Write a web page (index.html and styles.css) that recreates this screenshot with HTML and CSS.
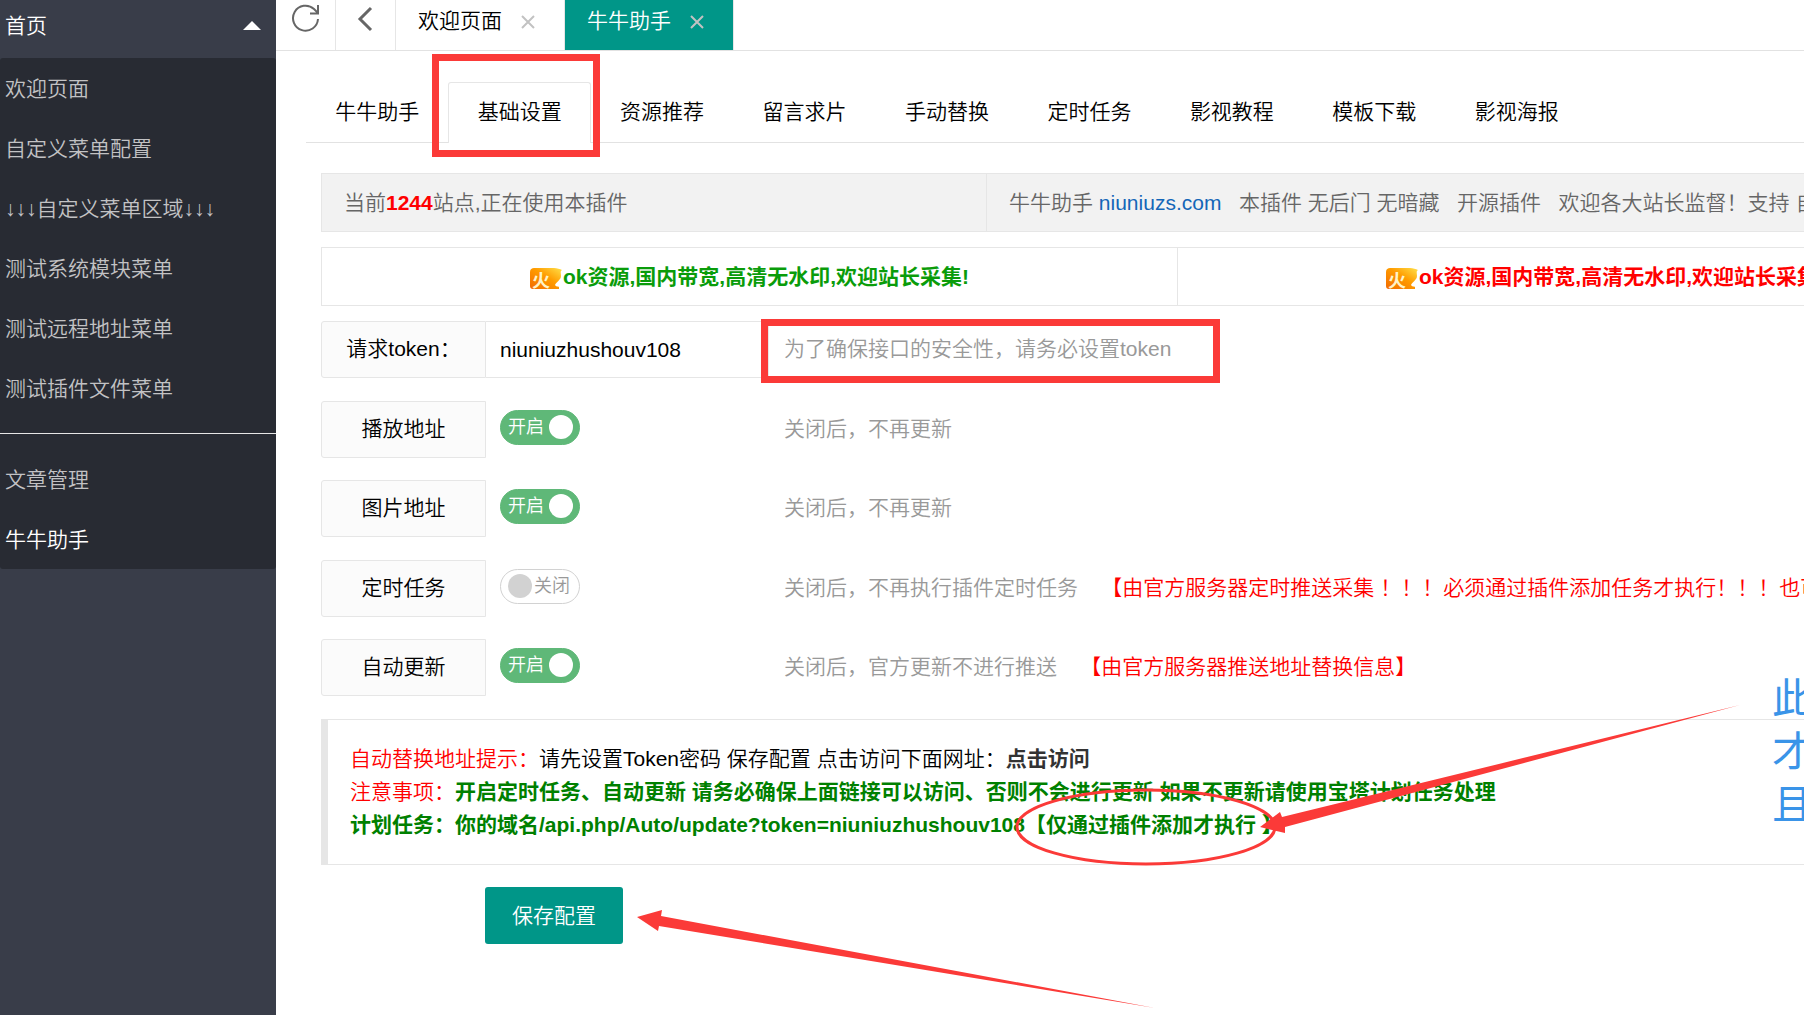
FILE: index.html
```html
<!DOCTYPE html>
<html lang="zh-CN">
<head>
<meta charset="utf-8">
<title>牛牛助手</title>
<link rel="stylesheet" href="styles.css">
</head>
<body>
<svg class="defs" width="0" height="0" aria-hidden="true">
  <defs>
    <linearGradient id="flame" x1="0" y1="1" x2="1" y2="0">
      <stop offset="0" stop-color="#f26a00"/>
      <stop offset=".55" stop-color="#ff9c00"/>
      <stop offset="1" stop-color="#ffe14a"/>
    </linearGradient>
    <symbol id="hot" viewBox="0 0 32 22">
      <path d="M4 0H24C27 0 30 1 32 2C30 3 31 5 31 8C31 12 26 14 25 17C26 19 28 18 29 19V21H3C1 21 0 20 0 18V4C0 1 2 0 4 0Z" fill="url(#flame)"/>
    </symbol>
  </defs>
</svg>
<div class="app">
  <aside class="side">
    <button class="side-head" type="button">首页
      <svg width="18" height="9" viewBox="0 0 18 9"><path d="M9 0L18 9H0Z" fill="#fff"/></svg>
    </button>
    <nav class="side-nav">
      <a href="#">欢迎页面</a>
      <a href="#">自定义菜单配置</a>
      <a href="#">↓↓↓自定义菜单区域↓↓↓</a>
      <a href="#">测试系统模块菜单</a>
      <a href="#">测试远程地址菜单</a>
      <a href="#">测试插件文件菜单</a>
      <hr>
      <a href="#">文章管理</a>
      <a href="#" class="current">牛牛助手</a>
    </nav>
  </aside>
  <main class="main">
    <div class="topbar">
      <button type="button" class="tool" aria-label="刷新">
        <svg width="30" height="30" viewBox="0 0 30 30" fill="none" stroke="#666" stroke-width="2"><path d="M27 16A12.500 12.500 0 1 1 23 6L27 10M27 2V10.500H19"/></svg>
      </button>
      <button type="button" class="tool" aria-label="后退">
        <svg width="30" height="30" viewBox="0 0 30 30" fill="none" stroke="#666" stroke-width="3"><path d="M20 5L9 16L20 27"/></svg>
      </button>
      <div class="page-tab"><a href="#">欢迎页面</a>
        <button type="button" aria-label="关闭"><svg width="14" height="14" viewBox="0 0 14 14" stroke="#c2c2c2" stroke-width="2"><path d="M1 1L13 13M13 1L1 13"/></svg></button>
      </div>
      <div class="page-tab active"><a href="#">牛牛助手</a>
        <button type="button" aria-label="关闭"><svg width="14" height="14" viewBox="0 0 14 14" stroke="#c2c2c2" stroke-width="2"><path d="M1 1L13 13M13 1L1 13"/></svg></button>
      </div>
    </div>
    <div class="content">
      <nav class="tabs">
        <div class="tab-list">
          <a href="#">牛牛助手</a>
          <a href="#" class="on">基础设置</a>
          <a href="#">资源推荐</a>
          <a href="#">留言求片</a>
          <a href="#">手动替换</a>
          <a href="#">定时任务</a>
          <a href="#">影视教程</a>
          <a href="#">模板下载</a>
          <a href="#">影视海报</a>
        </div>
      </nav>
      <div class="panel">
        <table class="info">
          <tr>
            <td class="count">当前<b>1244</b>站点,正在使用本插件</td>
            <td>牛牛助手 <a href="#">niuniuzs.com</a> &nbsp; 本插件 无后门 无暗藏 &nbsp; 开源插件 &nbsp; 欢迎各大站长监督！支持 自</td>
          </tr>
        </table>
        <table class="ads">
          <tr>
            <td><a href="#" class="green"><span class="hot"><svg width="32" height="22"><use href="#hot"/></svg><i>火</i></span>ok资源,国内带宽,高清无水印,欢迎站长采集!</a></td>
            <td><a href="#" class="red"><span class="hot"><svg width="32" height="22"><use href="#hot"/></svg><i>火</i></span>ok资源,国内带宽,高清无水印,欢迎站长采集!</a></td>
          </tr>
        </table>
        <form>
          <div class="rows">
            <div class="row">
              <label for="token">请求token：</label>
              <input class="text" id="token" type="text" value="niuniuzhushouv108">
              <p>为了确保接口的安全性，请务必设置token</p>
            </div>
            <div class="row">
              <label for="play">播放地址</label>
              <div class="field"><span class="switch"><input id="play" type="checkbox" checked><em>开启</em></span></div>
              <p>关闭后，不再更新</p>
            </div>
            <div class="row">
              <label for="pic">图片地址</label>
              <div class="field"><span class="switch"><input id="pic" type="checkbox" checked><em>开启</em></span></div>
              <p>关闭后，不再更新</p>
            </div>
            <div class="row">
              <label for="cron">定时任务</label>
              <div class="field"><span class="switch"><input id="cron" type="checkbox"><em>关闭</em></span></div>
              <p>关闭后，不再执行插件定时任务 &nbsp; &nbsp;<span class="warn">【由官方服务器定时推送采集 ！！！必须通过插件添加任务才执行！！！也可</span></p>
            </div>
            <div class="row">
              <label for="auto">自动更新</label>
              <div class="field"><span class="switch"><input id="auto" type="checkbox" checked><em>开启</em></span></div>
              <p>关闭后，官方更新不进行推送 &nbsp; &nbsp;<span class="warn">【由官方服务器推送地址替换信息】</span></p>
            </div>
          </div>
          <blockquote>
            <span class="warn">自动替换地址提示：</span>请先设置Token密码 保存配置 点击访问下面网址：<a href="#">点击访问</a><br>
            <span class="warn">注意事项：</span><b>开启定时任务、自动更新 请务必确保上面链接可以访问、否则不会进行更新 如果不更新请使用宝塔计划任务处理</b><br>
            <b>计划任务：你的域名/api.php/Auto/update?token=niuniuzhushouv108【仅通过插件添加才执行 】</b>
          </blockquote>
          <button class="save" type="submit">保存配置</button>
        </form>
      </div>
    </div>
  </main>
</div>
<div class="mark mark-tab"></div>
<div class="mark mark-token"></div>
<svg class="arrows" width="1804" height="1015" viewBox="0 0 1804 1015" fill="#fb3a38" aria-hidden="true">
  <ellipse cx="1146" cy="827" rx="129" ry="37" fill="none" stroke="#fb3a38" stroke-width="3"/>
  <path d="M1260 827L1280 812L1282 817L1740 705L1285 827L1285 833Z"/>
  <path d="M637 917L662 910L661 916L1155 1008L659 926L658 931Z"/>
</svg>
<div class="note">此<br>才<br>且</div>
</body>
</html>
```
FILE: styles.css
```css
* { box-sizing: border-box; }
body {
  margin: 0;
  position: relative;
  overflow: hidden;
  background: #fff;
  color: #000;
  font: 350 21px/33px "Liberation Sans", "Noto Sans CJK SC", sans-serif;
}
a { color: inherit; text-decoration: none; }
b { font-weight: 700; }
button { font: inherit; border: 0; background: none; padding: 0; cursor: pointer; }
p { margin: 0; }
svg { display: block; }
.defs { position: absolute; }

.app { display: flex; min-height: 100vh; }

.side { flex: none; width: 276px; background: #393d49; }
.side-head {
  display: flex;
  justify-content: space-between;
  align-items: center;
  width: 100%;
  height: 58px;
  padding: 0 15px 8px 5px;
  color: #fff;
}
.side-nav { background: #282b33; border-radius: 3px; overflow: hidden; }
.side-nav a { display: block; height: 60px; padding-left: 5px; line-height: 62px; color: #c2c2c4; }
.side-nav a.current { color: #fff; }
.side-nav hr { height: 1px; margin: 15px 0; border: 0; background: #e6e6e6; }

.main { flex: 1; min-width: 0; overflow: hidden; }
.topbar { display: flex; height: 51px; border-bottom: 1px solid #e2e2e2; }
.tool {
  display: flex;
  justify-content: center;
  width: 60px;
  padding-top: 3px;
  border-right: 1px solid #e6e6e6;
}
.page-tab {
  display: flex;
  align-items: center;
  gap: 19px;
  width: 169px;
  padding: 0 0 9px 22px;
  border-right: 1px solid #e6e6e6;
}
.page-tab button { padding-top: 3px; }
.page-tab.active { background: #009688; color: #fff; }

.content { padding: 31px 0 0 30px; }
.tabs { border-bottom: 1px solid #e2e2e2; }
.tab-list {
  display: grid;
  grid-template-columns: repeat(9, 1fr);
  width: 1282px;
  height: 60px;
}
.tab-list a { height: 61px; line-height: 58px; text-align: center; border: 1px solid transparent; border-bottom: 0; }
.tab-list .on { border-color: #e6e6e6; border-radius: 3px 3px 0 0; background: #fff; }

.panel { min-width: 1728px; padding: 30px 0 0 15px; }
table { width: 100%; border-collapse: collapse; table-layout: fixed; margin-bottom: 15px; }
td { height: 58px; padding: 0 22px; border: 1px solid #e6e6e6; white-space: nowrap; }
.info { background: #f2f2f2; color: #666; }
.info .count { width: 665px; }
.info b { color: #f00; }
.info a { color: #1466b8; }
.ads { text-align: center; font-weight: 700; }
.green { color: #0a9c0a; }
.red { color: #f00; }
.hot { display: inline-block; position: relative; width: 33px; height: 22px; vertical-align: -6px; }
.hot i {
  position: absolute;
  left: 2px;
  top: 0;
  font: 700 18px/22px "Noto Sans CJK SC", sans-serif;
  color: #fff3c8;
}

.rows { display: grid; align-content: space-between; min-height: 375px; }
.row { display: flex; height: 57px; align-items: center; }
.row label {
  width: 165px;
  height: 57px;
  line-height: 53px;
  text-align: center;
  background: #fbfbfb;
  border: 1px solid #e6e6e6;
  border-radius: 3px 0 0 3px;
}
.text {
  width: 283px;
  height: 57px;
  padding: 0 14px;
  border: 1px solid #e6e6e6;
  border-left: 0;
  font: inherit;
  color: #000;
}
.field { width: 283px; padding: 0 0 4px 14px; }
.row p { padding: 0 0 2px 15px; color: #999; white-space: nowrap; }
.row .warn, .warn { color: #f00; }

.switch { display: block; position: relative; width: 80px; height: 35px; }
.switch input {
  appearance: none;
  display: block;
  width: 80px;
  height: 35px;
  margin: 0;
  border: 1px solid #d2d2d2;
  border-radius: 20px;
  background: #fff;
}
.switch input::before {
  content: "";
  position: absolute;
  left: 8px;
  top: 5px;
  width: 24px;
  height: 24px;
  border-radius: 50%;
  background: #d2d2d2;
}
.switch input:checked { background: #5fb878; border-color: #5fb878; }
.switch input:checked::before { left: 49px; background: #fff; }
.switch em {
  position: absolute;
  left: 34px;
  top: 0;
  font-style: normal;
  font-size: 18px;
  line-height: 35px;
  color: #999;
  pointer-events: none;
}
.switch input:checked + em { left: 8px; color: #fff; }

blockquote {
  margin: 23px 0 22px;
  padding: 22px 22px 23px;
  border: 1px solid #e6e6e6;
  border-left-width: 7px;
  white-space: nowrap;
}
blockquote b { color: #008000; }
blockquote a { font-weight: 700; color: #333; }
.save {
  display: block;
  width: 138px;
  height: 57px;
  margin-left: 164px;
  border-radius: 3px;
  background: #009688;
  color: #fff;
}

.mark { position: absolute; border: 7px solid #fb3a38; pointer-events: none; }
.mark-tab { left: 432px; top: 54px; width: 168px; height: 103px; }
.mark-token { left: 761px; top: 319px; width: 459px; height: 64px; }
.arrows { position: absolute; left: 0; top: 0; pointer-events: none; }
.note {
  position: absolute;
  left: 1772px;
  top: 673px;
  font-size: 41px;
  line-height: 53px;
  font-weight: 400;
  color: #3a94e8;
}
```
